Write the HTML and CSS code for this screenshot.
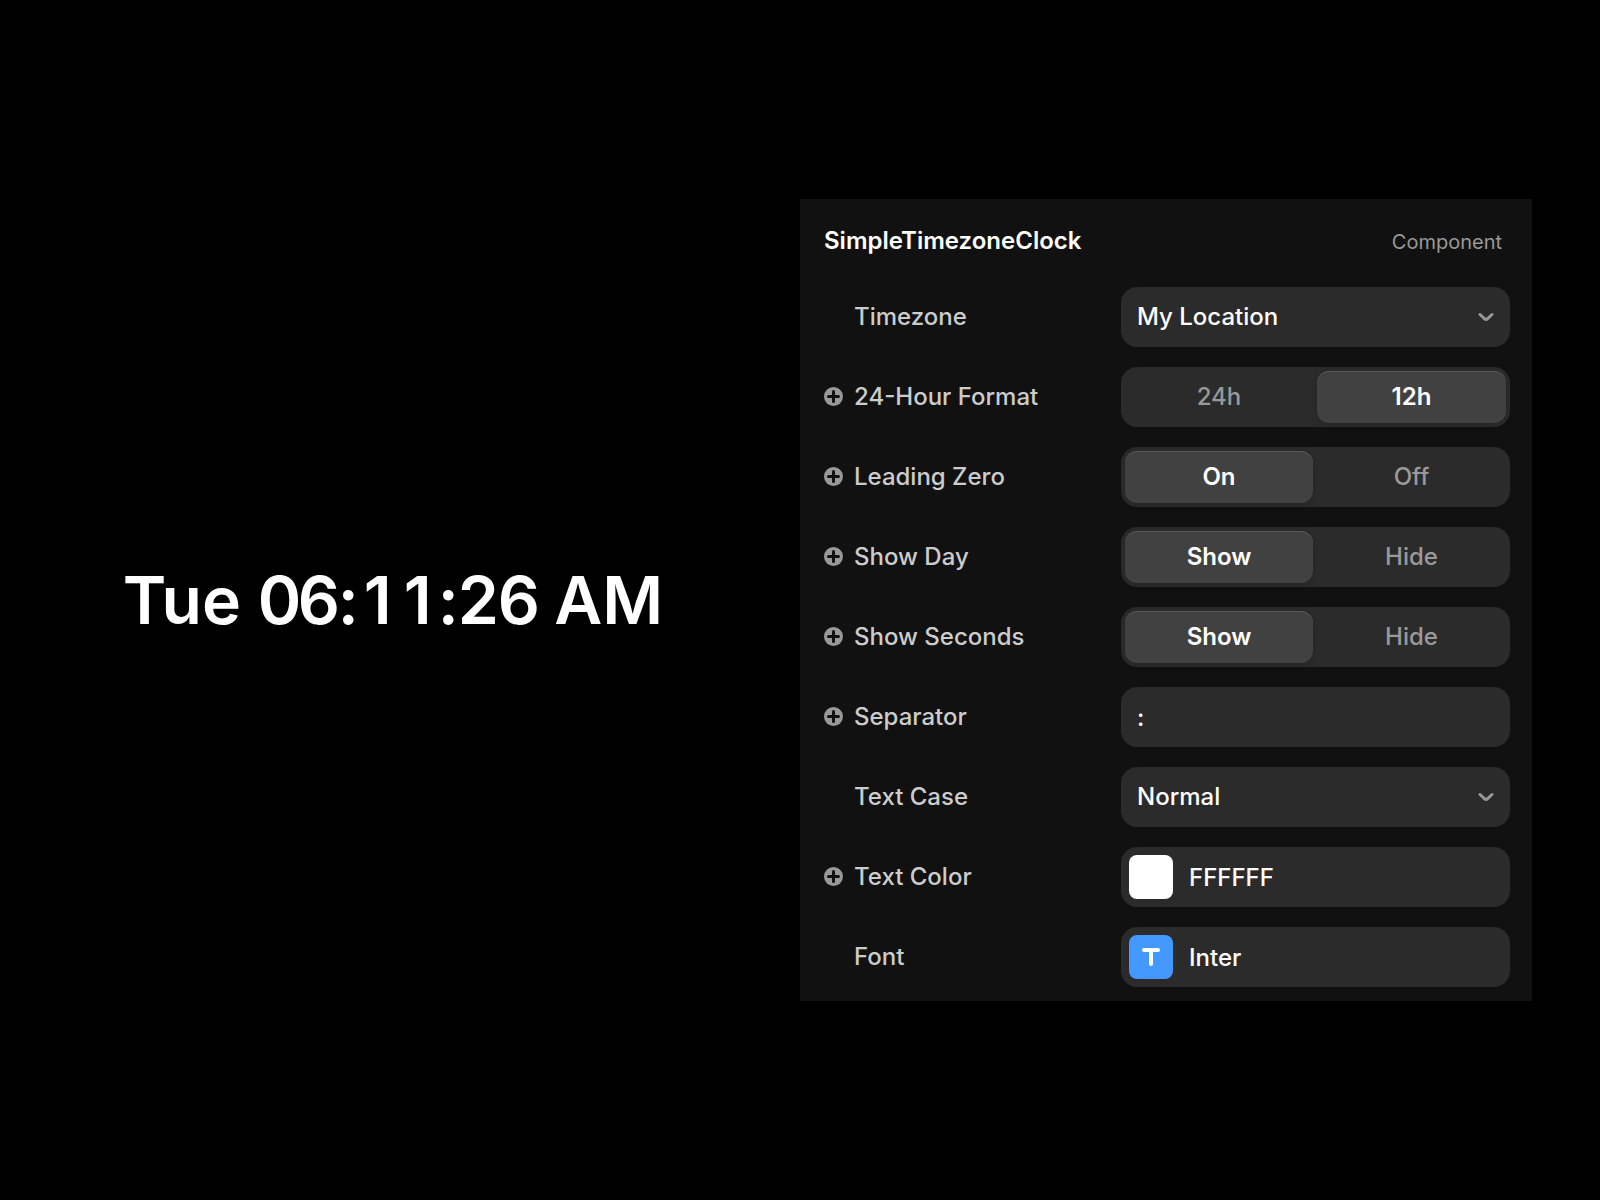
FILE: index.html
```html
<!DOCTYPE html>
<html lang="en">

<head>
    <meta charset="UTF-8">
    <meta name="viewport" content="width=device-width, initial-scale=1.0">
    <title>SimpleTimezoneClock</title>
    <link rel="stylesheet" href="styles.css">
</head>

<body>
    <main class="layout">
        <section class="preview">
            <time class="clock">Tue <span class="digit">0</span><span class="digit">6</span><span class="colon">:</span><span class="digit">1</span><span class="digit">1</span><span class="colon">:</span><span class="digit">2</span><span class="digit">6</span> AM</time>
        </section>

        <form class="panel">
            <header class="panel-header">
                <h1>SimpleTimezoneClock</h1>
                <span class="panel-type">Component</span>
            </header>

            <div class="row">
                <label class="row-label" for="timezone">Timezone</label>
                <div class="select-wrap">
                    <select class="field" id="timezone">
                        <option>My Location</option>
                    </select>
                    <svg class="chevron" viewBox="0 0 16 10"><path d="M2 2.5 L6.6 6.8 Q8 8 9.4 6.8 L14 2.5" /></svg>
                </div>
            </div>

            <div class="row">
                <button type="button" class="add" aria-label="Add variable for 24-Hour Format">
                    <svg viewBox="0 0 19 19"><circle cx="9.5" cy="9.5" r="9.5" /><path d="M9.5 4.5v10M4.5 9.5h10" /></svg>
                </button>
                <span class="row-label" id="format-label">24-Hour Format</span>
                <div class="segmented" role="radiogroup" aria-labelledby="format-label">
                    <input type="radio" name="format" id="format-24">
                    <label for="format-24">24h</label>
                    <input type="radio" name="format" id="format-12" checked>
                    <label for="format-12">12h</label>
                </div>
            </div>

            <div class="row">
                <button type="button" class="add" aria-label="Add variable for Leading Zero">
                    <svg viewBox="0 0 19 19"><circle cx="9.5" cy="9.5" r="9.5" /><path d="M9.5 4.5v10M4.5 9.5h10" /></svg>
                </button>
                <span class="row-label" id="zero-label">Leading Zero</span>
                <div class="segmented" role="radiogroup" aria-labelledby="zero-label">
                    <input type="radio" name="zero" id="zero-on" checked>
                    <label for="zero-on">On</label>
                    <input type="radio" name="zero" id="zero-off">
                    <label for="zero-off">Off</label>
                </div>
            </div>

            <div class="row">
                <button type="button" class="add" aria-label="Add variable for Show Day">
                    <svg viewBox="0 0 19 19"><circle cx="9.5" cy="9.5" r="9.5" /><path d="M9.5 4.5v10M4.5 9.5h10" /></svg>
                </button>
                <span class="row-label" id="day-label">Show Day</span>
                <div class="segmented" role="radiogroup" aria-labelledby="day-label">
                    <input type="radio" name="day" id="day-show" checked>
                    <label for="day-show">Show</label>
                    <input type="radio" name="day" id="day-hide">
                    <label for="day-hide">Hide</label>
                </div>
            </div>

            <div class="row">
                <button type="button" class="add" aria-label="Add variable for Show Seconds">
                    <svg viewBox="0 0 19 19"><circle cx="9.5" cy="9.5" r="9.5" /><path d="M9.5 4.5v10M4.5 9.5h10" /></svg>
                </button>
                <span class="row-label" id="seconds-label">Show Seconds</span>
                <div class="segmented" role="radiogroup" aria-labelledby="seconds-label">
                    <input type="radio" name="seconds" id="seconds-show" checked>
                    <label for="seconds-show">Show</label>
                    <input type="radio" name="seconds" id="seconds-hide">
                    <label for="seconds-hide">Hide</label>
                </div>
            </div>

            <div class="row">
                <button type="button" class="add" aria-label="Add variable for Separator">
                    <svg viewBox="0 0 19 19"><circle cx="9.5" cy="9.5" r="9.5" /><path d="M9.5 4.5v10M4.5 9.5h10" /></svg>
                </button>
                <label class="row-label" for="separator">Separator</label>
                <input class="field" type="text" id="separator" value=":">
            </div>

            <div class="row">
                <label class="row-label" for="textCase">Text Case</label>
                <div class="select-wrap">
                    <select class="field" id="textCase">
                        <option>Normal</option>
                    </select>
                    <svg class="chevron" viewBox="0 0 16 10"><path d="M2 2.5 L6.6 6.8 Q8 8 9.4 6.8 L14 2.5" /></svg>
                </div>
            </div>

            <div class="row">
                <button type="button" class="add" aria-label="Add variable for Text Color">
                    <svg viewBox="0 0 19 19"><circle cx="9.5" cy="9.5" r="9.5" /><path d="M9.5 4.5v10M4.5 9.5h10" /></svg>
                </button>
                <label class="row-label" for="textColor">Text Color</label>
                <div class="field swatch-field">
                    <input class="swatch" type="color" value="#ffffff" aria-label="Pick text color">
                    <input class="swatch-text" type="text" id="textColor" value="FFFFFF">
                </div>
            </div>

            <div class="row">
                <label class="row-label" for="font">Font</label>
                <button type="button" class="field swatch-field" id="font">
                    <svg class="swatch font-icon" viewBox="0 0 44 44"><path d="M15 15h14M22 15v14" /></svg>
                    <span class="swatch-text">Inter</span>
                </button>
            </div>
        </form>
    </main>
</body>

</html>
```

FILE: styles.css
```css
* {
    box-sizing: border-box;
}

body {
    margin: 0;
    background-color: #000;
    color: #fff;
    font-family: Inter, sans-serif;
    font-size: 24px;
    font-weight: 500;
    line-height: 30px;
}

input,
select,
button {
    margin: 0;
    padding: 0;
    border: none;
    background: none;
    color: inherit;
    font: inherit;
}

.layout {
    display: grid;
    grid-template-columns: 1fr 1fr;
    align-items: center;
    min-height: 100vh;
}

.preview {
    padding-right: 14px;
    text-align: center;
}

.clock {
    font-size: 66px;
    font-weight: 600;
    line-height: 80px;
    white-space: nowrap;
}

.digit,
.colon {
    display: inline-block;
    width: 40px;
    text-align: center;
}

.colon {
    width: 20px;
}

.panel {
    display: flex;
    flex-direction: column;
    gap: 20px;
    margin-right: 68px;
    padding: 27px 22px 14px 24px;
    background-color: #111;
}

.panel-header {
    display: flex;
    justify-content: space-between;
    align-items: baseline;
    height: 41px;
    padding-right: 8px;
}

.panel-header h1 {
    margin: 0;
    font-size: 24px;
    font-weight: 600;
}

.panel-type {
    color: #999;
    font-size: 20px;
    font-weight: 400;
}

/* icon | label | control */
.row {
    display: grid;
    grid-template-columns: 19px 1fr 389px;
    align-items: center;
    height: 60px;
}

.add {
    display: flex;
    align-items: flex-start;
    grid-column: 1;
    height: 20px;
    cursor: pointer;
}

.add svg {
    width: 19px;
    height: 19px;
    fill: #999;
    stroke: #111;
    stroke-width: 3;
    stroke-linecap: round;
}

.add circle {
    stroke: none;
}

.row-label {
    grid-column: 2;
    padding-left: 11px;
    color: #ccc;
}

.field {
    width: 100%;
    height: 60px;
    padding: 0 16px;
    border-radius: 16px;
    background-color: #2b2b2b;
}

.select-wrap {
    position: relative;
}

.select-wrap select {
    display: block;
    appearance: none;
}

.chevron {
    position: absolute;
    top: 25px;
    right: 16px;
    width: 16px;
    height: 10px;
    fill: none;
    stroke: #999;
    stroke-width: 3;
    stroke-linecap: round;
    pointer-events: none;
}

.segmented {
    display: grid;
    grid-template-columns: 188px 1fr;
    gap: 4px;
    height: 60px;
    padding: 4px;
    border-radius: 16px;
    background-color: #2b2b2b;
}

.segmented input {
    position: absolute;
    opacity: 0;
}

.segmented label {
    display: flex;
    align-items: center;
    justify-content: center;
    border-radius: 12px;
    color: #999;
    cursor: pointer;
}

.segmented input:checked + label {
    background-color: #414141;
    box-shadow: inset 0 1px 0 #555, 0 2px 6px rgba(0, 0, 0, 0.15);
    color: #fff;
    font-weight: 600;
}

.swatch-field {
    display: flex;
    align-items: center;
    gap: 16px;
    padding: 0 8px;
    text-align: left;
}

.swatch {
    flex: none;
    width: 44px;
    height: 44px;
    border-radius: 8px;
    overflow: hidden;
}

.swatch::-webkit-color-swatch-wrapper {
    padding: 0;
}

.swatch::-webkit-color-swatch {
    border: none;
}

.swatch-text {
    flex: 1;
    min-width: 0;
    padding-top: 2px;
}

.font-icon {
    background-color: #4398fb;
    fill: none;
    stroke: #fff;
    stroke-width: 4;
    stroke-linecap: round;
}
```
